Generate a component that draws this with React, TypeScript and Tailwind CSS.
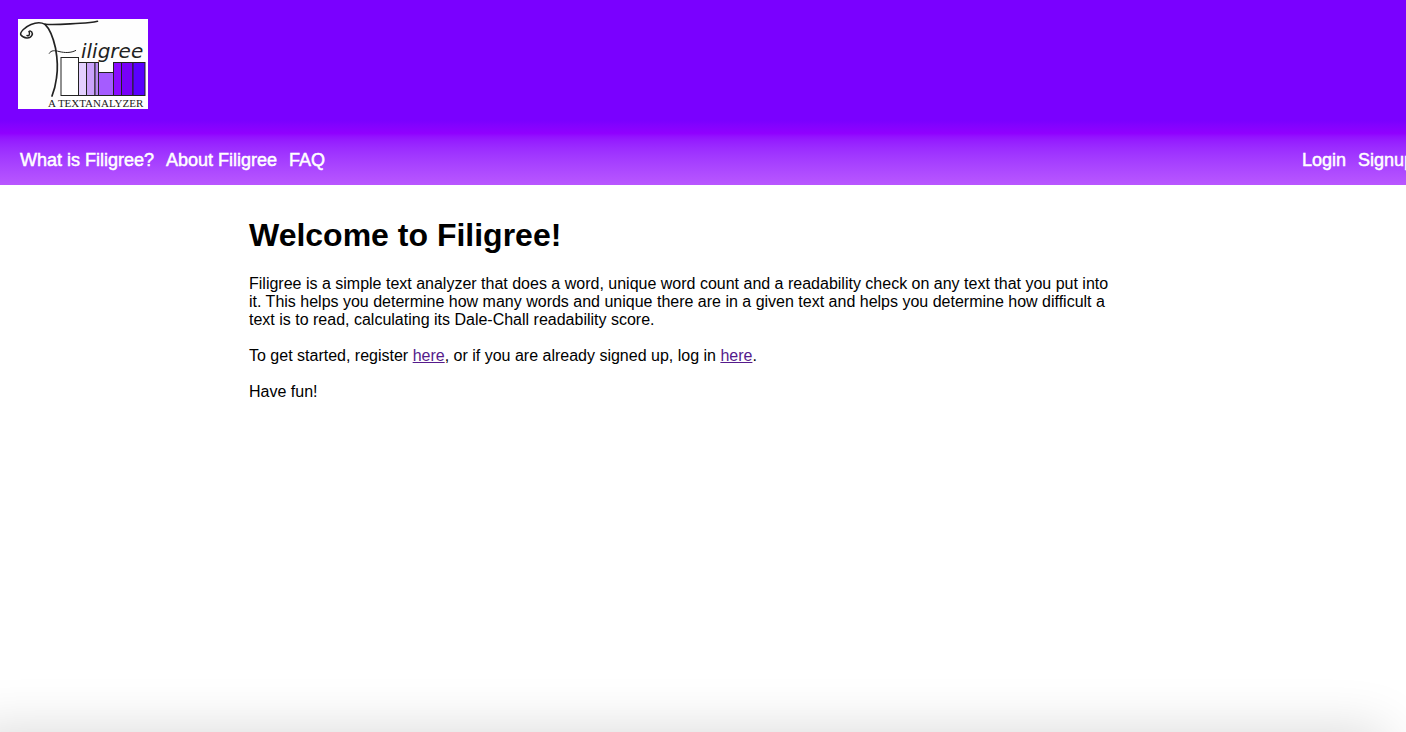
const navLink = "[-webkit-text-stroke:0.5px_white] whitespace-nowrap hover:underline";

function Logo() {
  return (
    <svg viewBox="0 0 130 90" className="block h-[90px] w-[130px] bg-[#fefefe]" role="img" aria-label="Filigree, a text analyzer">
      <g stroke="#222" strokeWidth="1">
        <rect x="43" y="38.5" width="17.5" height="38" fill="#fff" />
        <rect x="60.5" y="43.5" width="8" height="33" fill="#e3d0ff" />
        <rect x="68.5" y="43.5" width="8.5" height="33" fill="#c9a2fa" />
        <rect x="77" y="43.5" width="3.5" height="33" fill="#b98af5" />
        <rect x="80.5" y="53.5" width="15" height="23" fill="#a55cff" />
        <rect x="95.5" y="43.5" width="8" height="33" fill="#8a0cff" />
        <rect x="103.5" y="43.5" width="11.5" height="33" fill="#7800f8" />
        <rect x="115" y="43.5" width="12" height="33" fill="#5a00ff" />
      </g>
      <g fill="none" stroke="#222" strokeLinecap="round">
        <path strokeWidth="1.5" d="M9 16.500 C11 17.500 12.300 15 11 12.500 C13 11 15.300 14 13.800 16.500 C12 20 6 20 2.700 15.700 C2 13 7 8 13 5.500 C18 3.500 23 3.200 27 5.300" />
        <path strokeWidth="1.700" d="M27 5.300 C32 10 35.500 20 37.500 29 C39.500 40 40 50 38.500 59 C37.500 67 36 72 34 77" />
        <path strokeWidth="1.600" d="M27 5.300 C40 6.200 52 4.600 62 4.300 C69 4 75 3.400 79.500 2.300" />
        <path strokeWidth="1" d="M31.300 34.300 C33 31 37 31.400 41 32.500 C47 34 53 34 57.700 31.500" />
      </g>
      <text x="63" y="39" fontSize="20" fill="#222" className="font-['DejaVu_Sans'] font-extralight italic">iligree</text>
      <text x="30" y="88" fontSize="11" fill="#222" className="font-['Liberation_Serif']">A TEXTANALYZER</text>
    </svg>
  );
}

export default function App() {
  return (
    <div className="min-h-screen overflow-hidden bg-white font-['Liberation_Sans',Arial,sans-serif] text-base leading-[18px] text-black">
      <header className="overflow-hidden bg-linear-to-b from-[#7a00ff] from-65% via-[#9000ff] via-72% to-[#b957ff] pt-[19px] pb-[14px]">
        <a href="#home" className="ml-[18px] inline-block align-top">
          <Logo />
        </a>
        <nav className="mt-[41px] ml-5 flex w-full justify-between pr-3 text-lg leading-[21px] text-white">
          <div className="flex gap-3">
            <a href="#what" className={navLink}>What is Filigree?</a>
            <a href="#about" className={navLink}>About Filigree</a>
            <a href="#faq" className={navLink}>FAQ</a>
          </div>
          <div className="flex gap-3">
            <a href="#login" className={navLink}>Login</a>
            <a href="#signup" className={navLink}>Signup</a>
          </div>
        </nav>
      </header>
      <main className="mx-auto max-w-[908px] pt-8 pr-10">
        <h1 className="text-[32px] leading-9 font-bold">Welcome to Filigree!</h1>
        <p className="mt-[22px]">
          Filigree is a simple text analyzer that does a word, unique word count and a readability check on any text that you put into it. This helps you determine how many words and unique there are in a given text and helps you determine how difficult a text is to read, calculating its Dale-Chall readability score.
        </p>
        <p className="mt-[18px]">
          To get started, register <a href="#signup" className="text-[#551a8b] underline">here</a>, or if you are already signed up, log in <a href="#login" className="text-[#551a8b] underline">here</a>.
        </p>
        <p className="mt-[18px]">Have fun!</p>
      </main>
      <div aria-hidden="true" className="pointer-events-none fixed top-full right-5 -left-8 h-24 shadow-[0_0_56px_rgba(0,0,0,0.16)]" />
    </div>
  );
}
